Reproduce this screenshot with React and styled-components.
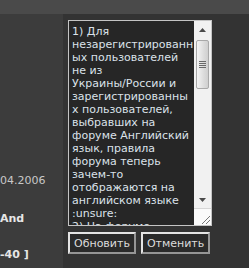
import React from 'react'
import { styled, createGlobalStyle } from 'styled-components'

const GlobalStyle = createGlobalStyle`
  html, body {
    margin: 0;
    padding: 0;
    background: #333333;
  }
  body {
    font-family: "DejaVu Sans", Verdana, sans-serif;
    font-size: 11px;
  }
`

const Page = styled.div`
  width: 249px;
  height: 268px;
  overflow: hidden;
  display: flex;
  flex-direction: column;
`

const TopBar = styled.div`
  height: 14px;
  background: #4a4a4a;
`

const Body = styled.div`
  flex: 1;
  display: flex;
`

const LeftCol = styled.div`
  width: 63px;
  background: #3c3c3c;
  padding-top: 160px;
  overflow: hidden;
  white-space: nowrap;
`

const Info = styled.div`
  line-height: 13px;
  color: ${(p) => (p.$bold ? '#e6e6e6' : '#c8c8c8')};
  font-weight: ${(p) => (p.$bold ? 'bold' : 'normal')};
  margin-top: ${(p) => p.$gap || 0}px;
`

const RightCol = styled.div`
  flex: 1;
  background: #333333;
  padding: 6px 0 0 5px;
`

const Frame = styled.div`
  width: 144px;
  height: 206px;
  box-sizing: border-box;
  border: 1px solid #c4c4c4;
  background: #262626;
  display: flex;
`

const Text = styled.textarea`
  flex: 1;
  min-width: 0;
  margin: 0;
  border: 0;
  outline: none;
  resize: none;
  overflow: hidden;
  background: transparent;
  color: #dbe2ea;
  font-family: "DejaVu Sans", Verdana, sans-serif;
  font-size: 11px;
  line-height: 13px;
  padding: 4px 0 0 3px;
`

const ScrollBar = styled.div`
  width: 17px;
  background: #f1f1f1;
  display: flex;
  flex-direction: column;
`

const Arrow = styled.div`
  height: 17px;
  display: flex;
  align-items: center;
  justify-content: center;
`

const Track = styled.div`
  flex: 1;
  padding: 2px 2px 0 2px;
`

const Thumb = styled.div`
  height: 49px;
  box-sizing: border-box;
  border: 1px solid #a8a8a8;
  border-radius: 2px;
  background: linear-gradient(to right, #f4f4f4, #dcdcdc 60%, #cfcfcf);
  display: flex;
  flex-direction: column;
  align-items: center;
  justify-content: center;
  gap: 1px;
`

const Grip = styled.div`
  width: 7px;
  height: 1px;
  background: #6a6a6a;
`

const Corner = styled.div`
  height: 16px;
  background: #fafafa;
  border-top: 1px solid #d6d6d6;
  display: flex;
  align-items: flex-end;
  justify-content: flex-end;
`

const Buttons = styled.div`
  display: flex;
  gap: 5px;
  margin-top: 6px;
`

const Button = styled.button`
  height: 22px;
  margin: 0;
  padding: 0 4px;
  background: #2a2a2a;
  color: #dcdcdc;
  font-family: "DejaVu Sans", Verdana, sans-serif;
  font-size: 11px;
  border: 2px solid;
  border-color: #e4e4e4 #959595 #959595 #e4e4e4;
  cursor: pointer;
`

// word joiner after the slash keeps "Украины/России" on one line, as in the reference
const message = `1) Для незарегистрированных пользователей не из Украины/\u2060России и зарегистрированных пользователей, выбравших на форуме Английский язык, правила форума теперь зачем-то отображаются на английском языке :unsure:
2) На форуме`

function Tri({ down }) {
  return (
    <svg width="7" height="4" viewBox="0 0 7 4">
      <polygon points={down ? '0,0 7,0 3.5,4' : '0,4 7,4 3.5,0'} fill="#4a4a4a" />
    </svg>
  )
}

export default function App() {
  return (
    <Page>
      <GlobalStyle />
      <TopBar />
      <Body>
        <LeftCol>
          <Info>04.2006</Info>
          <Info $bold $gap={25}>And</Info>
          <Info $bold $gap={23}>-40 ]</Info>
        </LeftCol>
        <RightCol>
          <Frame>
            <Text readOnly value={message} />
            <ScrollBar>
              <Arrow><Tri /></Arrow>
              <Track>
                <Thumb>
                  <Grip />
                  <Grip />
                  <Grip />
                  <Grip />
                </Thumb>
              </Track>
              <Arrow><Tri down /></Arrow>
              <Corner>
                <svg width="12" height="12" viewBox="0 0 12 12">
                  <line x1="3" y1="11" x2="11" y2="3" stroke="#777" strokeWidth="1" />
                  <line x1="7" y1="11" x2="11" y2="7" stroke="#777" strokeWidth="1" />
                </svg>
              </Corner>
            </ScrollBar>
          </Frame>
          <Buttons>
            <Button>Обновить</Button>
            <Button>Отменить</Button>
          </Buttons>
        </RightCol>
      </Body>
    </Page>
  )
}
